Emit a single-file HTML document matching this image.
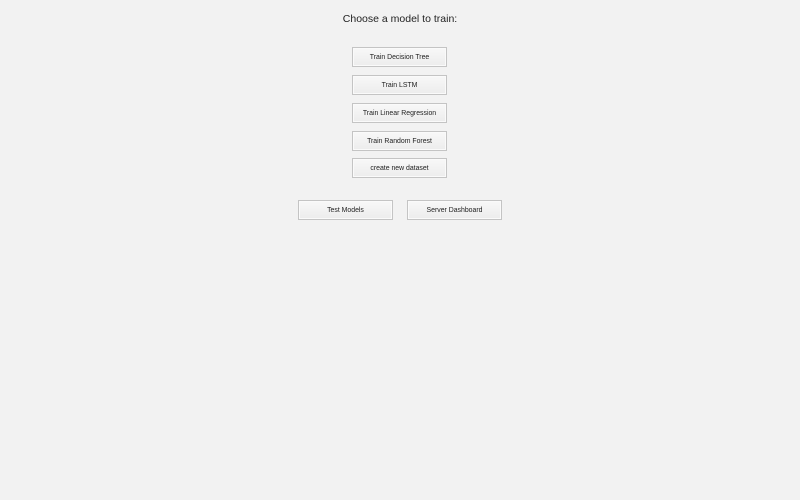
<!DOCTYPE html>
<html><head><style>
html,body{margin:0;padding:0;width:800px;height:500px;background:#f2f2f2;overflow:hidden;font-family:"Liberation Sans",Arial,sans-serif;}
.t{position:absolute;top:13px;left:0;width:800px;text-align:center;font-size:10.5px;color:#222;}
.b{position:absolute;width:93px;height:18px;border:1px solid #c4c4c4;background:linear-gradient(#f8f8f8,#ececec);font-size:6.9px;color:#222;text-align:center;line-height:19px;box-shadow:inset 0 0 0 1px #fafafa;}
</style></head><body>
<div class="t">Choose a model to train:</div>
<div class="b" style="left:352px;top:47px">Train Decision Tree</div>
<div class="b" style="left:352px;top:75px">Train LSTM</div>
<div class="b" style="left:352px;top:103px">Train Linear Regression</div>
<div class="b" style="left:352px;top:131px">Train Random Forest</div>
<div class="b" style="left:352px;top:158px">create new dataset</div>
<div class="b" style="left:298px;top:200px">Test Models</div>
<div class="b" style="left:407px;top:200px">Server Dashboard</div>
</body></html>
